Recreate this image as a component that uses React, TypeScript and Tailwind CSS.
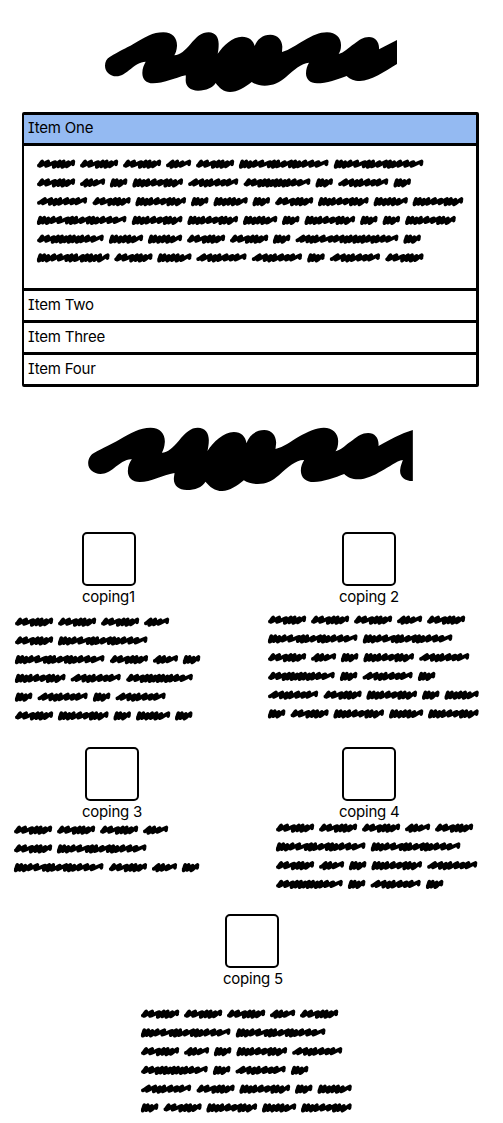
import React from "react";

type Word = { width: number; peaks: number[] };

// Horizontal positions of the crests of each scribbled word.
const WORDS: Record<string, Word> = {
  A: { width: 43, peaks: [6.8, 12.8, 20, 24.5, 28.5, 33, 38] },
  B: { width: 30, peaks: [8.5, 13, 18.2, 25] },
  C: { width: 22.5, peaks: [5, 8.5, 12.5, 17.2] },
  D: { width: 55.6, peaks: [5, 9, 13, 17.5, 24, 30.5, 36, 40, 44.5, 50.4] },
  E: { width: 55.5, peaks: [9.6, 16, 20.6, 25, 32, 38, 43, 50] },
  F: { width: 72, peaks: [7, 12.8, 18.8, 22.8, 26.8, 30.8, 34.8, 38.8, 43, 47, 52.8, 59, 66.6] },
  G: { width: 94.9, peaks: [5, 9, 13, 18.3, 25, 33, 37, 41, 47.5, 54, 58, 62, 68, 75, 81.3, 89.3] },
  H: { width: 39, peaks: [5, 9, 13.3, 17.8, 22.3, 27, 34] },
  I: { width: 108, peaks: [9.6, 15, 19, 23, 30, 38, 43, 49, 53, 57, 62, 66, 70, 75, 80, 84, 90, 95.3, 102.7] },
  J: { width: 77.3, peaks: [5, 9, 13, 19, 25.5, 32.5, 36.5, 41, 48, 52, 56, 60.5, 65, 72.3] },
};

const r = (n: number) => Number(n.toFixed(2));

function wordPath(peaks: number[], x: number, y: number) {
  let px = x + 1.9;
  let py = y + 1.4;
  let d = `M${r(px)} ${r(py)}`;
  peaks.forEach((p, i) => {
    const tx = x + p - 1.7;
    const gap = tx - px;
    const next = peaks[i + 1];
    const dense = (next !== undefined && next - p < 4.8) || (i > 0 && p - peaks[i - 1] < 4.8);
    const ty = y - 2.5 + (i % 3 === 2 ? 0.7 : 0);
    d += `C${r(px + gap * 0.3)} ${r(py - 0.4)} ${r(tx - gap * 0.25)} ${r(ty + 0.5)} ${r(tx)} ${r(ty)}`;
    const bx = tx - (next === undefined ? 0.3 : dense ? 1.6 : 2.1);
    const by = next === undefined ? y + 0.2 : y + (dense ? 2.9 - (i % 2) * 0.6 : 1.8);
    d += `C${r(tx + 0.5)} ${r(ty + 0.3)} ${r(bx - 0.4)} ${r(by - 0.4)} ${r(bx)} ${r(by)}`;
    px = bx;
    py = by;
  });
  return d;
}

function Scribbles({ lines, width, className = "" }: { lines: string[]; width: number; className?: string }) {
  const height = Math.ceil(lines.length * 18.75);
  return (
    <svg width={width} height={height} viewBox={`0 0 ${width} ${height}`} className={`block shrink-0 overflow-visible ${className}`} fill="none" stroke="black" strokeWidth="3.8" strokeLinecap="round" strokeLinejoin="round" aria-hidden="true">
      {lines.map((line, row) => {
        let x = 0;
        return [...line].map((key, i) => {
          const word = WORDS[key];
          const d = wordPath(word.peaks, x, 6 + row * 18.75);
          x += word.width;
          return <path key={`${row}-${i}`} d={d} />;
        });
      })}
    </svg>
  );
}

function Accordion() {
  return (
    <section className="ml-[22px] mt-[20px] w-[457px] rounded-[2px] border-[3px] border-l-2 border-black tracking-[-0.2px]">
      <div className="flex h-[31px] items-center border-b-[3px] border-black bg-[#94baf2] pb-[2px] pl-[4px]">Item One</div>
      <div className="h-[145px] border-b-[3px] border-black pl-[13px] pt-[12px]">
        <Scribbles
          lines={["AAABAGG", "ABCDEFCEC", "EADCHCADHD", "GDDHCDCCD", "FHHAACIC", "JAHEECEA"]}
          width={430}
        />
      </div>
      <div className="flex h-[32px] items-center border-b-[3px] border-black pb-px pl-[4px]">Item Two</div>
      <div className="flex h-[32px] items-center border-b-[3px] border-black pb-px pl-[4px]">Item Three</div>
      <div className="flex h-[29px] items-center pb-px pl-[4px]">Item Four</div>
    </section>
  );
}

function Coping({ label, lines, className, boxClass = "", labelClass, textClass, width }: {
  label: string;
  lines: string[];
  className: string;
  boxClass?: string;
  labelClass: string;
  textClass: string;
  width: number;
}) {
  return (
    <article className={`flex flex-col items-start ${className}`}>
      <div className={`h-[54px] w-[54px] shrink-0 rounded-[5px] border-2 border-black ${boxClass}`} />
      <div className={`h-[22px] whitespace-nowrap leading-[22px] tracking-[-0.25px] ${labelClass}`}>{label}</div>
      <Scribbles lines={lines} width={width} className={textClass} />
    </article>
  );
}

const FULL = ["AAABA", "GG", "ABCDE", "FCEC", "EADCH", "CADHD"];
const SHORT = ["AAAB", "AG", "GABC"];

export default function App() {
  return (
    <main className="h-[1123px] w-[503px] overflow-hidden bg-white font-['Inter','Noto_Sans',sans-serif] text-[15px] leading-5 text-black [font-feature-settings:'cv08']">
      <svg className="ml-[95px] mt-[20px] block" width="302" height="72" viewBox="0 0 906 216" fill="black" aria-hidden="true">
        <path d="M44 111C75 92 91 86 115 72C151 51 173 37 205 37C234 37 247 56 246 78C245 92 242 99 238 106C256 105 270 91 286 73C305 50 320 37 341 37C361 37 371 52 371 72C371 84 370 92 368 101C386 76 412 50 441 50C462 50 475 61 479 78C486 58 503 44 526 44C548 44 561 60 562 80L561 96C584 90 603 75 628 61C654 46 672 37 696 37C724 37 739 55 738 77C738 88 735 95 731 102C747 97 759 84 778 71C792 61 804 51 822 51C841 51 854 67 852 88L906 60V132C870 154 828 183 795 183C777 183 766 178 755 168C729 178 694 190 666 190C645 190 633 178 633 160C633 147 637 137 642 128C619 130 596 150 573 171C553 188 534 197 509 197C494 197 481 193 470 186C450 202 427 216 405 216C386 216 372 203 362 189C353 203 334 212 309 212C286 212 272 199 272 181C272 175 273 170 272 166C239 174 205 190 174 190C153 190 142 177 142 159C142 145 147 134 152 125C135 125 119 137 102 151C90 161 79 169 64 169C45 169 30 155 30 137C30 126 35 116 44 111Z" />
      </svg>
      <Accordion />
      <svg className="ml-[80px] mt-[33px] block" width="333" height="71" viewBox="0 0 998 213" fill="black" aria-hidden="true">
        <path d="M40 100C73 80 92 74 117 59C153 38 178 23 211 23C241 23 255 42 254 66C253 80 250 90 245 98C263 98 278 82 296 62C316 37 332 23 353 23C375 23 386 38 386 61C386 73 384 83 382 93C399 66 430 36 461 36C483 36 496 50 499 69C507 47 526 30 552 30C576 30 587 47 588 68L586 87C611 81 630 66 658 49C685 34 707 23 731 23C758 23 775 41 774 65C774 77 771 87 766 94C785 89 798 73 818 60C834 48 845 39 864 39C885 39 897 55 895 78C927 60 963 40 998 30V183C972 183 958 169 960 149C961 137 966 127 968 120C948 123 926 142 904 153C882 166 857 178 834 178C815 178 803 172 792 162C766 172 729 186 701 186C676 186 663 173 662 152C662 139 667 128 672 120C648 119 624 141 597 165C576 183 559 192 533 192C516 192 502 188 491 181C471 197 449 213 426 213C404 213 388 200 376 185C365 202 345 210 320 210C296 210 281 197 281 177C281 171 283 164 283 159C247 165 212 186 179 186C156 186 143 173 143 153C143 138 149 126 155 118C136 117 119 131 101 145C88 155 77 162 61 162C40 162 24 148 24 130C24 118 30 106 40 100Z" />
      </svg>
      <div className="mt-[41px] flex h-[215px]">
        <Coping label="coping1" width={190} className="w-[252px] shrink-0 pl-[15px]" boxClass="ml-[67px]" labelClass="ml-[67px]" textClass="mt-[8px]" lines={["AAAB", "AG", "GABC", "DEF", "CECE", "ADCHC"]} />
        <Coping label="coping 2" width={215} className="w-[251px] pl-[16px]" boxClass="ml-[74px]" labelClass="ml-[71px]" textClass="mt-[6px]" lines={FULL} />
      </div>
      <div className="flex h-[167px]">
        <Coping label="coping 3" width={190} className="w-[252px] shrink-0 pl-[14px]" boxClass="ml-[71px]" labelClass="ml-[68px]" textClass="mt-[1px]" lines={SHORT} />
        <Coping label="coping 4" width={205} className="w-[251px] pl-[24px]" boxClass="ml-[66px]" labelClass="ml-[63px]" textClass="-mt-px" lines={FULL.slice(0, 4)} />
      </div>
      <Coping label="coping 5" width={215} className="pl-[141px]" boxClass="ml-[84px]" labelClass="ml-[82px]" textClass="mt-[18px]" lines={FULL} />
    </main>
  );
}
